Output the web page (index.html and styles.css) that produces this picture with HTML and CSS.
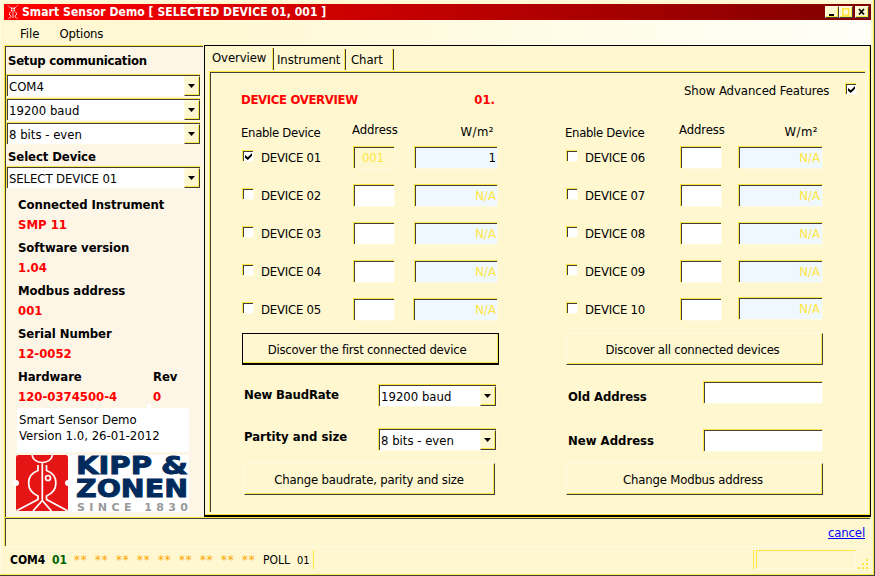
FILE: index.html
```html
<!DOCTYPE html>
<html lang="en">
<head>
<meta charset="utf-8">
<title>Smart Sensor Demo</title>
<link rel="stylesheet" href="styles.css">
</head>
<body>
<div class="window">
  <header class="titlebar">
    <svg class="app-icon" width="12" height="14" viewBox="0 0 12 14" fill="none" stroke="#fff" stroke-width="1"><path d="M1 .5 3.500 3H8L10.500 .5M4.500 3v3L2.500 8v2l2 1.500L1.500 13.500M7.500 3v3l2 2v2l-2 1.500 3 2M6 3v10" stroke-dasharray="1.500 .6"/></svg>
    <h1>Smart Sensor Demo [ SELECTED DEVICE 01, 001 ]</h1>
    <div class="winbtns">
      <span class="wb"><svg width="12" height="11"><path d="M3 7h5v2H3z"/></svg></span>
      <span class="wb"><svg width="12" height="11"><path d="M2.750 1.750h6v6.500h-6z" fill="none" stroke="#ffe640" stroke-width="1.500"/></svg></span>
      <span class="wb close"><svg width="12" height="11"><path d="M3 2 8 7.500M8 2 3 7.500" stroke="#000" stroke-width="1.700"/></svg></span>
    </div>
  </header>
  <nav class="menu"><span>File</span><span class="opt">Options</span></nav>
  <div class="main">
    <aside class="side">
      <h2 class="setup">Setup communication</h2>
      <div class="combo"><span>COM4</span><i></i></div>
      <div class="combo"><span>19200 baud</span><i></i></div>
      <div class="combo"><span>8 bits - even</span><i></i></div>
      <h2 class="select">Select Device</h2>
      <div class="combo"><span class="caps">SELECT DEVICE 01</span><i></i></div>
      <dl class="info">
        <dt>Connected Instrument</dt><dd>SMP 11</dd>
        <dt>Software version</dt><dd>1.04</dd>
        <dt>Modbus address</dt><dd>001</dd>
        <dt>Serial Number</dt><dd>12-0052</dd>
      </dl>
      <div class="hw">
        <dl class="info"><dt>Hardware</dt><dd>120-0374500-4</dd></dl>
        <dl class="info"><dt>Rev</dt><dd>0</dd></dl>
      </div>
      <p class="version">Smart Sensor Demo<br><span>Version 1.0, 26-01-2012</span></p>
      <svg class="logo" width="173" height="57" viewBox="0 0 173 57">
        <rect x="52" width="121" height="57" fill="#fff"/>
        <rect x="0" y="0" width="52" height="56" rx="2.500" fill="#e51515"/>
        <g fill="none" stroke="#fff" stroke-width="1.700">
          <path d="M16 0C18 10 34.500 10 36.500 0M26.300 7.500V46M22 10V15.500C9.500 20 9.500 36 22 41V44.500L1 55.500M30.500 10V15.500C43 20 43 36 30.500 41V44.500L51 55.500M26.300 45.500 17 56M26.300 45.500 35.500 56"/>
          <circle cx="32" cy="23" r="2.500"/>
        </g>
        <circle cx="0" cy="28" r="3" fill="#fff"/><circle cx="52" cy="28" r="3" fill="#fff"/>
        <g class="brand">
          <text x="60" y="18.500" textLength="76" lengthAdjust="spacingAndGlyphs">KIPP</text>
          <text x="145" y="18.500" textLength="27" lengthAdjust="spacingAndGlyphs">&amp;</text>
          <text x="60" y="41.500" textLength="112" lengthAdjust="spacingAndGlyphs">ZONEN</text>
        </g>
        <text class="since" x="61" y="55.500" textLength="111" lengthAdjust="spacing"><tspan>SINCE 1830</tspan></text>
      </svg>
    </aside>
    <section class="tabs">
      <div class="tabbar"><span class="tab active">Overview</span><span class="tab inst">Instrument</span><span class="tab chart">Chart</span></div>
      <div class="page">
        <div class="col left">
          <div class="top"><b class="ov">DEVICE OVERVIEW</b><b class="num">01.</b></div>
          <div class="heads"><span>Enable Device</span><span class="ha">Address</span><span class="hw2">W/m²</span></div>
          <div class="dev"><i class="cb on"></i><span>DEVICE 01</span><div class="field off">001</div><div class="field val live">1</div></div>
          <div class="dev"><i class="cb"></i><span>DEVICE 02</span><div class="field"></div><div class="field val">N/A</div></div>
          <div class="dev"><i class="cb"></i><span>DEVICE 03</span><div class="field"></div><div class="field val">N/A</div></div>
          <div class="dev"><i class="cb"></i><span>DEVICE 04</span><div class="field"></div><div class="field val">N/A</div></div>
          <div class="dev"><i class="cb"></i><span>DEVICE 05</span><div class="field"></div><div class="field val wide">N/A</div></div>
          <div class="btn default">Discover the first connected device</div>
          <div class="form f1"><b>New BaudRate</b><div class="combo"><span>19200 baud</span><i></i></div></div>
          <div class="form f2"><b>Partity and size</b><div class="combo"><span>8 bits - even</span><i></i></div></div>
          <div class="btn change">Change baudrate, parity and size</div>
        </div>
        <div class="col right">
          <div class="top"><span>Show Advanced Features</span><i class="cb on"></i></div>
          <div class="heads"><span>Enable Device</span><span class="ha">Address</span><span class="hw2">W/m²</span></div>
          <div class="dev"><i class="cb"></i><span>DEVICE 06</span><div class="field"></div><div class="field val">N/A</div></div>
          <div class="dev"><i class="cb"></i><span>DEVICE 07</span><div class="field"></div><div class="field val">N/A</div></div>
          <div class="dev"><i class="cb"></i><span>DEVICE 08</span><div class="field"></div><div class="field val">N/A</div></div>
          <div class="dev"><i class="cb"></i><span>DEVICE 09</span><div class="field"></div><div class="field val">N/A</div></div>
          <div class="dev"><i class="cb"></i><span>DEVICE 10</span><div class="field"></div><div class="field val up">N/A</div></div>
          <div class="btn">Discover all connected devices</div>
          <div class="form g1"><b>Old Address</b><div class="field"></div></div>
          <div class="form g2"><b>New Address</b><div class="field"></div></div>
          <div class="btn modbus">Change Modbus address</div>
        </div>
      </div>
    </section>
  </div>
  <div class="bottom"><a>cancel</a></div>
  <footer class="status">
    <b class="port">COM4</b><b class="id">01</b>
    <div class="stars"><span>**</span><span>**</span><span>**</span><span>**</span><span>**</span><span>**</span><span>**</span><span>**</span><span>**</span></div>
    <span class="poll">POLL</span><span class="pn">01</span>
    <div class="progress"></div>
    <svg class="grip" width="12" height="12" fill="#ffe640"><path d="M8 0h2v2H8zM4 4h2v2H4zM8 4h2v2H8zM0 8h2v2H0zM4 8h2v2H4zM8 8h2v2H8z"/></svg>
  </footer>
</div>
</body>
</html>
```
FILE: styles.css
```css
* { box-sizing: border-box; }
body { margin: 0; font: 13px/20px "DejaVu Sans Condensed", "DejaVu Sans", sans-serif; color: #000; }
h1, h2, dl, dt, dd, p { margin: 0; font-size: inherit; }
i { font-style: normal; display: block; flex: none; }
.window { width: 875px; height: 576px; overflow: hidden; background: #fef7d0; padding: 4px 3px 2px 4px; display: flex; flex-direction: column; border-right: 1px solid #404040; border-bottom: 1px solid #404040; box-shadow: inset -1px -1px #ffe640, inset 1px 1px #fffbe0; white-space: nowrap; }

.titlebar { height: 16px; flex: none; display: flex; align-items: center; background: linear-gradient(90deg, #f00, #800000); color: #fff; padding-left: 3px; }
.app-icon { margin-right: 3px; }
.titlebar h1 { flex: 1; font-size: 12px; line-height: 16px; letter-spacing: .09px; }
.winbtns { display: flex; padding-right: 2px; }
.wb { width: 14px; height: 12px; background: #fef7d0; border: 1px solid; border-color: #fffbe8 #404040 #404040 #fffbe8; box-shadow: inset -1px -1px #ffe640; overflow: hidden; display: flex; }
.wb.close { margin-left: 2px; }

.menu { height: 25px; flex: none; padding: 4px 0 0 16px; display: flex; gap: 20px; background: linear-gradient(90deg, #fff8d2 20%, #fffff8); }
.opt { letter-spacing: -.2px; }

.main { height: 472px; flex: none; display: flex; }
.side { width: 200px; background: #fdf5e6; border: 1px solid #ffe640; border-right-color: #fffbe0; border-bottom: 0; box-shadow: inset 1px 1px #404040; padding: 0 0 0 1px; }
.side h2 { padding-left: 2px; }
.side .setup { height: 28px; line-height: 30px; letter-spacing: -.25px; }
.side .select { height: 20px; line-height: 22px; letter-spacing: -.1px; }
.side .combo { width: 195px; margin-bottom: 1px; }
.caps { letter-spacing: -.1px; }

.combo { height: 23px; background: #fff; border: 1px solid; border-color: #ffe640 #fffbe0 #fffbe0 #ffe640; box-shadow: inset 1px 1px #404040; display: flex; padding: 1px 0 0 2px; }
.combo span { flex: 1; line-height: 21px; }
.combo i { width: 16px; height: 20px; background: #fef7d0; border: 1px solid; border-color: #fffbe0 #404040 #404040 #fffbe0; box-shadow: inset -1px -1px #ffe640; padding: 7px 0 0 3px; }
.combo i::before { content: ""; display: block; width: 7px; height: 4px; background: #000; clip-path: polygon(0 0, 100% 0, 50% 100%); }

.info dt, .info dd { height: 20px; line-height: 20px; font-weight: bold; letter-spacing: -.06px; }
.info dd { color: #f00; margin-bottom: 3px; letter-spacing: 0; }
.side > .info { margin: 6px 0 0 12px; }
.hw { display: flex; margin-left: 12px; background: linear-gradient(#fff, #fff) 129px 37px / 4px 6px no-repeat; }
.hw .info:first-child { width: 135px; }
.version { width: 172px; height: 44px; margin: -2px 0 3px 11px; padding: 4px 0 0 2px; line-height: 16px; background: #fff; }
.logo { display: block; margin-left: 10px; overflow: visible; }
.brand { font: bold 24px "DejaVu Sans"; fill: #002b5c; stroke: #002b5c; stroke-width: .9px; }
.since { font: bold 11px "DejaVu Sans"; fill: #999; }

.tabs { width: 667px; border: 1px solid #000; border-bottom-width: 2px; box-shadow: inset -1px -1px #ffe640; display: flex; flex-direction: column; }
.tabbar { height: 25px; flex: none; display: flex; padding-top: 2px; }
.tab { height: 21px; border-right: 1px solid #404040; box-shadow: inset -1px 0 #ffe640; padding: 1px 0 0 3px; letter-spacing: -.1px; }
.tab.active { width: 69px; height: 22px; padding: 0 0 0 7px; }
.tab.inst { width: 72px; margin-top: 1px; line-height: 19px; }
.tab.chart { width: 48px; margin-top: 1px; padding-left: 5px; line-height: 19px; }
.page { width: 657px; height: 442px; margin-left: 4px; border: 1px solid; border-color: #ffe640 #fffbe0 #fffbe0 #ffe640; box-shadow: inset 1px 1px #404040; padding: 1px 0 0 31px; display: flex; gap: 66px; }
.col { width: 258px; }
.top { height: 50px; display: flex; color: #f00; padding-top: 17px; }
.ov { letter-spacing: -.33px; }
.num { margin-left: auto; padding-right: 4px; }
.right .top { width: 292px; color: #000; padding: 8px 0 0 119px; letter-spacing: -.07px; }
.right .top .cb { margin: 2px 0 0 auto; }
.heads { height: 23px; display: flex; line-height: 20px; letter-spacing: -.1px; }
.heads span:first-child { width: 111px; letter-spacing: -.32px; }
.heads .ha { margin-top: -3px; }
.heads .hw2 { margin: -1px 5px 0 auto; letter-spacing: .5px; }
.right .ha { margin-left: 3px; }
.dev { height: 38px; display: flex; margin-left: 1px; }
.cb { width: 12px; height: 12px; margin-top: 4px; background: #fff; border: 1px solid; border-color: #ffe640 #fffbe0 #fffbe0 #ffe640; box-shadow: inset 1px 1px #404040; }
.cb.on::before { content: ""; display: block; width: 7px; height: 7px; margin: 2px 0 0 2px; background: #000; clip-path: polygon(0 29%, 40% 62%, 100% 0, 100% 40%, 40% 100%, 0 68%); }
.dev > span { width: 99px; padding-left: 7px; line-height: 23px; letter-spacing: -.22px; }
.right .dev > span { width: 102px; }
.field { height: 23px; background: #fff; border: 1px solid; border-color: #ffe640 #fffbe0 #fffbe0 #ffe640; box-shadow: inset 1px 1px #404040; line-height: 22px; }
.dev .field { width: 42px; flex: none; }
.dev .val { width: 84px; margin-left: 19px; background: #eff7ff; color: #ffe640; text-align: right; padding-right: 1px; }
.dev .live { color: #000; }
.dev .off { background: #fef7d0; color: #ffe640; padding-left: 8px; letter-spacing: -.1px; }
.dev .wide { width: 85px; margin-left: 18px; }
.right .dev .val { margin-left: 16px; width: 85px; padding-right: 2px; }
.dev .up { margin-top: -1px; }

.btn { height: 32px; line-height: 32px; width: 257px; margin: -3px 0 0 1px; padding-right: 4px; text-align: center; border: 1px solid; border-color: #fffbe0 #404040 #404040 #fffbe0; box-shadow: inset -1px -1px #ffe640; letter-spacing: -.25px; }
.btn.default { border-color: #000; border-bottom-width: 2px; line-height: 31px; padding-right: 7px; }
.btn.change { width: 251px; margin-left: 3px; letter-spacing: -.18px; padding-right: 1px; }
.btn.modbus { padding-right: 3px; letter-spacing: -.18px; }
.form { display: flex; margin-left: 1px; }
.form b { flex: none; padding-left: 2px; }
.left .form b { width: 136px; }
.right .form b { width: 137px; }
.form .combo { width: 119px; }
.form .field { width: 120px; }
.f1 { height: 44px; margin-top: 19px; }
.f2 { height: 38px; }
.f1 b { line-height: 22px; letter-spacing: -.15px; }
.f2 b { line-height: 17px; }
.g1 { height: 48px; margin-top: 16px; }
.g2 { height: 37px; }
.g1 b { line-height: 31px; letter-spacing: -.1px; }
.g2 b { line-height: 23px; }

.bottom { height: 30px; flex: none; width: 867px; border: 1px solid; border-color: #ffe640 #fffbe0 #fffbe0 #ffe640; box-shadow: inset 1px 1px #404040; text-align: right; padding: 5px 5px 0 0; }
.bottom a { color: #00f; text-decoration: underline; letter-spacing: -.15px; }
.status { height: 25px; display: flex; padding: 3px 0 0 6px; font-size: 12px; line-height: 20px; }
.port { width: 42px; }
.id { width: 22px; color: #006400; }
.stars { display: flex; color: #ffa500; font-size: 13px; line-height: 19px; letter-spacing: 1px; }
.stars span { width: 21px; }
.poll { width: 34px; }
.pn { width: 17px; height: 19px; border-right: 1px solid #ffe640; font-size: 11px; line-height: 21px; }
.progress { width: 103px; height: 19px; margin-left: auto; border-left: 1px solid #ffe640; position: relative; }
.progress::before { content: ""; position: absolute; inset: 0 0 0 2px; border: 1px solid; border-color: #ffe640 #fffbe0 #fffbe0 #ffe640; }
.grip { margin: 9px 1px 0 2px; }
```
